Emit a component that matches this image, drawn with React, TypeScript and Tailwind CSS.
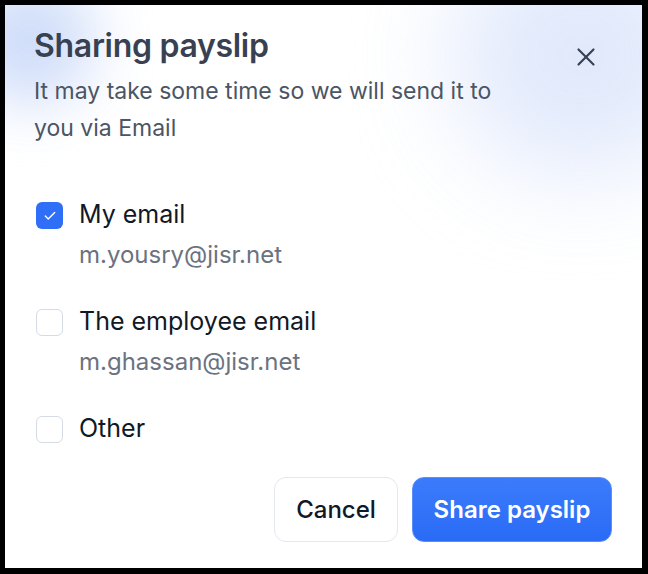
import { useState } from "react";
import { X, Check } from "lucide-react";

const options = [
  { id: "mine", label: "My email", email: "m.yousry@jisr.net" },
  { id: "employee", label: "The employee email", email: "m.ghassan@jisr.net" },
  { id: "other", label: "Other", email: "" },
];

export default function App() {
  const [selected, setSelected] = useState<string[]>(["mine"]);

  const toggle = (id: string) => {
    setSelected((prev) => (prev.includes(id) ? prev.filter((x) => x !== id) : [...prev, id]));
  };

  return (
    <div className="w-[648px] h-[574px] bg-black pt-[5px] pl-[5px] pr-[6px] pb-[6px] font-['Inter',sans-serif]">
      <div className="relative w-full h-full bg-white overflow-hidden flex flex-col">
        {/* soft blue glows */}
        <div className="absolute -left-[40px] -top-[30px] w-[130px] h-[130px] rounded-full bg-[#c4d5f8] opacity-80 blur-[30px]" />
        <div className="absolute -right-[70px] -top-[70px] w-[260px] h-[240px] rounded-full bg-[#d4e0fa] opacity-70 blur-[50px]" />

        <button className="absolute right-[41px] top-[37px] text-[#374151]">
          <X size={30} strokeWidth={1.7} />
        </button>

        <div className="relative flex flex-col pl-[29px] pt-[21px]">
          <h1 className="text-[32px] leading-[40px] font-semibold text-[#374151] tracking-[-0.3px]">Sharing payslip</h1>
          <p className="mt-[7px] w-[495px] text-[23px] leading-[37px] text-[#4b5563]">
            It may take some time so we will send it to you via Email
          </p>
        </div>

        <div className="relative flex flex-col gap-[34px] pl-[31px] mt-[51px]">
          {options.map((o) => {
            const on = selected.includes(o.id);
            return (
              <label key={o.id} className="flex items-start gap-[16px] cursor-pointer" onClick={() => toggle(o.id)}>
                <span
                  className={
                    on
                      ? "mt-[4px] w-[27px] h-[27px] rounded-[6px] bg-[#2f6ff7] flex items-center justify-center"
                      : "mt-[4px] w-[27px] h-[27px] rounded-[6px] border border-[#d5dbe5] bg-white"
                  }
                >
                  {on && <Check size={14} strokeWidth={2.4} className="text-white" />}
                </span>
                <span className="flex flex-col">
                  <span className="text-[25px] leading-[32px] text-[#111827]">{o.label}</span>
                  {o.email && <span className="mt-[9px] text-[24px] leading-[32px] text-[#6b7280]">{o.email}</span>}
                </span>
              </label>
            );
          })}
        </div>

        <div className="relative mt-auto flex justify-end gap-[14px] pr-[30px] pb-[26px]">
          <button className="w-[124px] h-[65px] rounded-[12px] border border-[#e3e8f0] bg-white text-[24px] text-[#111827] font-medium">
            Cancel
          </button>
          <button className="w-[200px] h-[65px] rounded-[12px] border border-[#5b8ef9] bg-gradient-to-b from-[#3b7bfb] to-[#2a6bf6] text-[24px] font-semibold text-white">
            Share payslip
          </button>
        </div>
      </div>
    </div>
  );
}
